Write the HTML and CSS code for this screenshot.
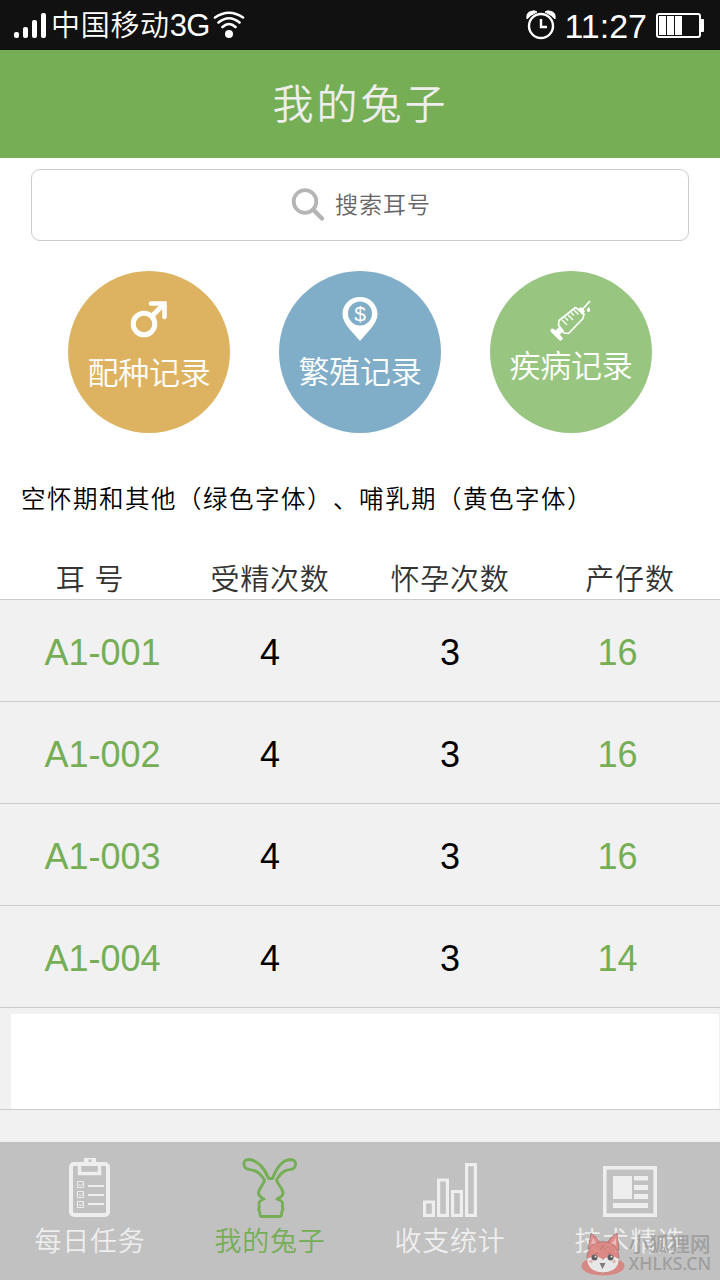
FILE: index.html
```html
<!DOCTYPE html>
<html lang="zh-CN">
<head>
    <meta charset="UTF-8">
    <title>我的兔子</title>
    <link rel="stylesheet" href="styles.css">
</head>
<body>
    <div class="phone">
        <!-- 状态栏 -->
        <div class="status">
            <div class="status-left">
                <svg class="signal" width="33" height="26" viewBox="0 0 33 26" fill="#fff">
                    <rect x="0" y="19" width="5" height="6" rx="2"/>
                    <rect x="9" y="14" width="5" height="11" rx="2"/>
                    <rect x="18" y="7" width="5" height="18" rx="2"/>
                    <rect x="27" y="0" width="5" height="25" rx="2"/>
                </svg>
                <span class="carrier">中国移动<span class="net">3G</span></span>
                <svg class="wifi" width="32" height="28" viewBox="0 0 32 28" fill="none" stroke="#fff" stroke-width="2.6" stroke-linecap="round">
                    <path d="M2 6.500Q16 -3 30 6.500M5.500 11.500Q16 3 26.500 11.500M9.500 16Q16 10 22.500 16"/>
                    <circle cx="16" cy="23" r="4" fill="#fff" stroke="none"/>
                </svg>
            </div>
            <div class="status-right">
                <svg class="alarm" width="30" height="30" viewBox="0 0 30 30" fill="none" stroke="#fff" stroke-width="2.4">
                    <circle cx="15" cy="16" r="12"/>
                    <path d="M15 9V17H21"/>
                    <path d="M1 9Q0 3 4.500 1.500Q9 0 11 2Q4 5 1 9ZM29 9Q30 3 25.500 1.500Q21 0 19 2Q26 5 29 9Z" fill="#fff" stroke="#fff" stroke-width="1"/>
                </svg>
                <span class="time">11:27</span>
                <svg class="battery" width="48" height="25" viewBox="0 0 48 25">
                    <rect x="1" y="1" width="43" height="23" rx="2" fill="none" stroke="#fff" stroke-width="2"/>
                    <path d="M45 6h2q1 0 1 1v11q0 1-1 1h-2zM3 3h7v19H3zM11 3h7v19h-7zM19 3h7v19h-7z" fill="#fff"/>
                </svg>
            </div>
        </div>

        <!-- 标题 -->
        <div class="header">我的兔子</div>

        <!-- 搜索 -->
        <div class="search">
            <svg width="35" height="35" viewBox="0 0 35 35" fill="none" stroke="#b5b5b5" stroke-width="3.800">
                <circle cx="14" cy="13.500" r="11.300"/>
                <path d="M22 21.500L31 30.500" stroke-width="4.500" stroke-linecap="round"/>
            </svg>
            <span>搜索耳号</span>
        </div>

        <!-- 记录入口 -->
        <div class="records">
            <div class="record mating">
                <svg width="38" height="38" viewBox="0 0 38 38" fill="none" stroke="#fff" stroke-width="5">
                    <circle cx="14" cy="24" r="10.800"/>
                    <path d="M22 16L33 5"/>
                    <path d="M21 3.500H34.500V17" stroke-linecap="round" stroke-width="4.600"/>
                </svg>
                <span>配种记录</span>
            </div>
            <div class="record breeding">
                <svg width="36" height="44" viewBox="0 0 36 44">
                    <path d="M18 0C8 0 .500 7.500 .500 17C.500 27 10 34 18 44C26 34 35.500 27 35.500 17C35.500 7.500 28 0 18 0Z" fill="#fff"/>
                    <circle cx="18" cy="16.500" r="12" fill="#80adc7"/>
                    <text class="dollar" x="18" y="23.500" text-anchor="middle" fill="#fff">$</text>
                </svg>
                <span>繁殖记录</span>
            </div>
            <div class="record disease">
                <svg width="42" height="41" viewBox="0 0 42 41" fill="none" stroke="#fff" stroke-width="1.700">
                    <path d="M8.500 25L9 20.500L25.500 7.500L34 14L33 18.500L18.500 33.500L14 33Z" stroke-linejoin="round"/>
                    <path d="M12 20l5 5M15 17.500l3 3M18 15l5 5M21 12.500l3 3M24 10l4.500 4.500" stroke-width="1.400"/>
                    <path d="M31 11L40 1"/>
                    <path d="M28 9l3-2 4 4-3 4zM39 7q2.500 3.500 0 5q-3-.5-2-3z" fill="#fff" stroke="none"/>
                    <path d="M2.500 30.500L10.500 38.500" stroke-width="4" stroke-linecap="round"/>
                    <path d="M6 34L12 28.500" stroke-width="6"/>
                </svg>
                <span>疾病记录</span>
            </div>
        </div>

        <p class="note">空怀期和其他（绿色字体）、哺乳期（黄色字体）</p>

        <!-- 列表 -->
        <div class="row head">
            <span>耳 号</span><span>受精次数</span><span>怀孕次数</span><span>产仔数</span>
        </div>
        <div class="list">
            <div class="row"><span class="ear">A1-001</span><span>4</span><span>3</span><span class="born">16</span></div>
            <div class="row"><span class="ear">A1-002</span><span>4</span><span>3</span><span class="born">16</span></div>
            <div class="row"><span class="ear">A1-003</span><span>4</span><span>3</span><span class="born">16</span></div>
            <div class="row"><span class="ear">A1-004</span><span>4</span><span>3</span><span class="born">14</span></div>
            <div class="row blank"><div class="blank-box"></div></div>
            <div class="row rest"></div>
        </div>

        <!-- 底部导航 -->
        <div class="nav">
            <div class="tab">
                <svg width="60" height="60" viewBox="0 0 60 60" fill="none" stroke="#eee" stroke-width="4">
                    <rect x="11" y="6" width="37" height="51" rx="3"/>
                    <path d="M19.500 6V15.500H39.500V6" stroke-width="3.500"/>
                    <path d="M24 0H36V5H24Z" fill="#eee" stroke="none"/>
                    <rect x="28.500" y="1.500" width="3" height="2.500" fill="#c1c1c1" stroke="none"/>
                    <path d="M28 28H44M28 37H44M28 46H44" stroke-width="1.800"/>
                    <path d="M17.500 23.500h6v6h-6zM17.500 33.500h6v6h-6zM17.500 43.500h6v6h-6zM19 26l1.500 2 3-3M19 36l1.500 2 3-3M19 46l1.500 2 3-3" stroke-width="1"/>
                </svg>
                <span>每日任务</span>
            </div>
            <div class="tab active">
                <svg width="60" height="60" viewBox="0 0 60 60" fill="none" stroke="#75ae55" stroke-width="2.900" stroke-linejoin="round">
                    <path d="M28.500 20.500C25 11 18 2 8.500 1.500C4.500 1.500 3 5 4.500 8.500C6 12.500 10 11 14 12.500C19 14 22 18 24.500 22C24 26 18.500 31 18.500 35C18.500 38.500 21 39 24 41C20.500 42.500 18.500 43.500 19 47C19.500 49 19.500 50 18.500 51.500C20 53 20 54 20 56.500Q20 58.500 22 58.500H39.500Q41.500 58.500 41.500 56.500C41.500 54 41.500 53 43 51.500C42 50 42.500 49 42.500 47C43 43.500 41 42.500 37 41C40.500 39 43 38.500 43 35C43 31 37.500 26 36.500 22C39 18 41 14 46 12.500C50 11 54 12.500 55 8.500C56.500 5 55 1.500 50.500 1.500C42 2 36 11 32.500 20.500Z"/>
                </svg>
                <span>我的兔子</span>
            </div>
            <div class="tab">
                <svg width="60" height="60" viewBox="0 0 60 60" fill="none" stroke="#eee" stroke-width="3.200">
                    <path d="M4.600 44h8.800v13.400H4.600zM18.600 22h8.800v35.400h-8.800zM32.600 33.500h8.800v23.900h-8.800zM46.600 6.600h8.800v50.800h-8.800z"/>
                </svg>
                <span>收支统计</span>
            </div>
            <div class="tab">
                <svg width="60" height="60" viewBox="0 0 60 60" fill="#eee">
                    <rect x="4.800" y="9.800" width="50.400" height="47.400" fill="none" stroke="#eee" stroke-width="3.600"/>
                    <path d="M13 18h19v23H13zM34 18h14v4.500H34zM34 27h14v5H34zM34 36h14v5H34zM13 45h35v5H13z"/>
                </svg>
                <span>技术精选</span>
            </div>
        </div>

        <!-- 水印 -->
        <div class="watermark">
            <svg width="44" height="44" viewBox="0 0 44 44">
                <ellipse cx="22" cy="34" rx="21.500" ry="9.500" fill="#dc7f7b"/>
                <path d="M7 17L10 1Q16 5 19 11H26Q30 4 36 1L38 18Z" fill="#df817c" stroke="#91605e" stroke-width=".7"/>
                <path d="M10 12L12 6L16 12ZM30 12L35 6V13Z" fill="#f0b4b0"/>
                <ellipse cx="22" cy="25" rx="16" ry="15.500" fill="#df807b" stroke="#91605e" stroke-width=".6"/>
                <path d="M6 27Q15 21 22 28Q29 21 38 27Q37 40 22 40.500Q7 40 6 27Z" fill="#eee"/>
                <path d="M19 17l4-3M22 18l6-4M14 22l3-1M27 21l3 1" stroke="#b86663" fill="none"/>
                <circle cx="13.500" cy="25.500" r="3" fill="#514c50"/>
                <circle cx="29.500" cy="25.500" r="3" fill="#514c50"/>
                <circle cx="14.500" cy="24.500" r=".9" fill="#fff"/>
                <circle cx="30.500" cy="24.500" r=".9" fill="#fff"/>
                <circle cx="10" cy="29.500" r="1.800" fill="#edb0af"/>
                <circle cx="33" cy="29.500" r="1.800" fill="#edb0af"/>
                <path d="M18.500 31h6l-3 6z" fill="#77706f"/>
            </svg>
            <div class="mark-text">
                <span class="mark-name">小狐狸网</span>
                <span class="mark-site">XHLKS.CN</span>
            </div>
        </div>
    </div>
</body>
</html>
```
FILE: styles.css
```css
/* 全局 */
body {
    margin: 0;
    background-color: white;
    font-family: "Liberation Sans", "Noto Sans CJK SC", sans-serif;
    font-weight: 350;
    text-spacing-trim: space-all;
}
svg {
    display: block;
    flex: none;
}
.phone {
    position: relative;
    display: flex;
    flex-direction: column;
    width: 720px;
    height: 1280px;
    overflow: hidden;
}
/* 状态栏 */
.status {
    display: flex;
    justify-content: space-between;
    box-sizing: border-box;
    height: 50px;
    padding: 0 16px 0 14px;
    background-color: #111;
    color: white;
}
.status-left, .status-right {
    display: flex;
    align-items: center;
    white-space: nowrap;
}
.signal {
    margin: 2px 4px 0 0;
}
.carrier {
    padding-top: 2px;
    font-size: 29px;
    letter-spacing: 0.7px;
    line-height: 50px;
}
.net {
    font-size: 31px;
    letter-spacing: -0.8px;
}
.wifi {
    margin-left: 3px;
}
.time {
    margin: 3px 9px 0 8px;
    font-size: 34px;
}
.battery {
    margin-top: 1px;
}
/* 标题 */
.header {
    box-sizing: border-box;
    height: 108px;
    padding-right: 0;
    background-color: #75ae55;
    color: #eee;
    font-size: 41px;
    letter-spacing: 3px;
    line-height: 110px;
    text-align: center;
    text-indent: 1px;
}
/* 搜索框 */
.search {
    display: flex;
    align-items: center;
    justify-content: center;
    gap: 9px;
    box-sizing: border-box;
    height: 72px;
    margin: 11px 31px 0;
    padding-left: 2px;
    border: 1px solid #ccc;
    border-radius: 9px;
    color: #666;
    font-size: 23px;
    letter-spacing: 1px;
}
.search span {
    padding-bottom: 4px;
}
/* 圆形按钮 */
.records {
    display: flex;
    justify-content: center;
    gap: 49px;
    margin-top: 30px;
}
.record {
    display: flex;
    flex-direction: column;
    align-items: center;
    box-sizing: border-box;
    width: 162px;
    height: 162px;
    border-radius: 50%;
    color: white;
    font-size: 31px;
    letter-spacing: -0.2px;
    line-height: 40px;
}
.mating {
    padding-top: 29px;
    background-color: #ddb361;
}
.mating span {
    margin-top: 16px;
}
.breeding {
    padding-top: 26px;
    background-color: #80adc7;
}
.breeding span {
    margin-top: 12px;
}
.disease {
    padding-top: 29px;
    background-color: #98c681;
}
.disease span {
    margin-top: 6px;
}
.dollar {
    font-size: 21px;
}
.note {
    height: 40px;
    margin: 47px 0 0 21px;
    color: #000;
    font-size: 24.5px;
    letter-spacing: 1.5px;
    line-height: 40px;
    white-space: nowrap;
}
/* 表格 */
.row {
    display: grid;
    grid-template-columns: repeat(4, 180px);
    box-sizing: border-box;
    height: 102px;
    border-top: 1px solid #ccc;
    color: #000;
    font-size: 36px;
    line-height: 106px;
    text-align: center;
}
.head {
    height: 41px;
    margin-top: 38px;
    border-top: none;
    color: #333;
    font-size: 29px;
    letter-spacing: 0.8px;
    line-height: 45px;
}
.list {
    height: 543px;
    background-color: #f1f1f1;
}
.ear {
    padding-left: 25px;
    color: #75ae55;
}
.born {
    padding-right: 25px;
    color: #75ae55;
}
.blank {
    display: block;
    padding: 6px 1px 0 11px;
}
.blank-box {
    height: 95px;
    background-color: white;
}
.rest {
    height: 33px;
}
/* 底部导航 */
.nav {
    display: grid;
    grid-template-columns: repeat(4, 180px);
    height: 138px;
    background-color: #c1c1c1;
}
.tab {
    display: flex;
    flex-direction: column;
    align-items: center;
    padding-top: 16px;
    color: #eee;
    font-size: 27px;
    letter-spacing: 0.8px;
    line-height: 48px;
}
.active {
    color: #75ae55;
}
/* 水印 */
.watermark {
    position: absolute;
    right: 9px;
    bottom: 4px;
    display: flex;
    gap: 4px;
    opacity: 0.85;
}
.mark-text {
    display: flex;
    flex-direction: column;
    color: #999;
    font-family: "Noto Sans", "Noto Sans CJK SC", sans-serif;
    font-weight: 500;
    white-space: nowrap;
}
.mark-name {
    font-size: 20.5px;
    line-height: 24px;
}
.mark-site {
    font-size: 17.5px;
    line-height: 15px;
}
```
